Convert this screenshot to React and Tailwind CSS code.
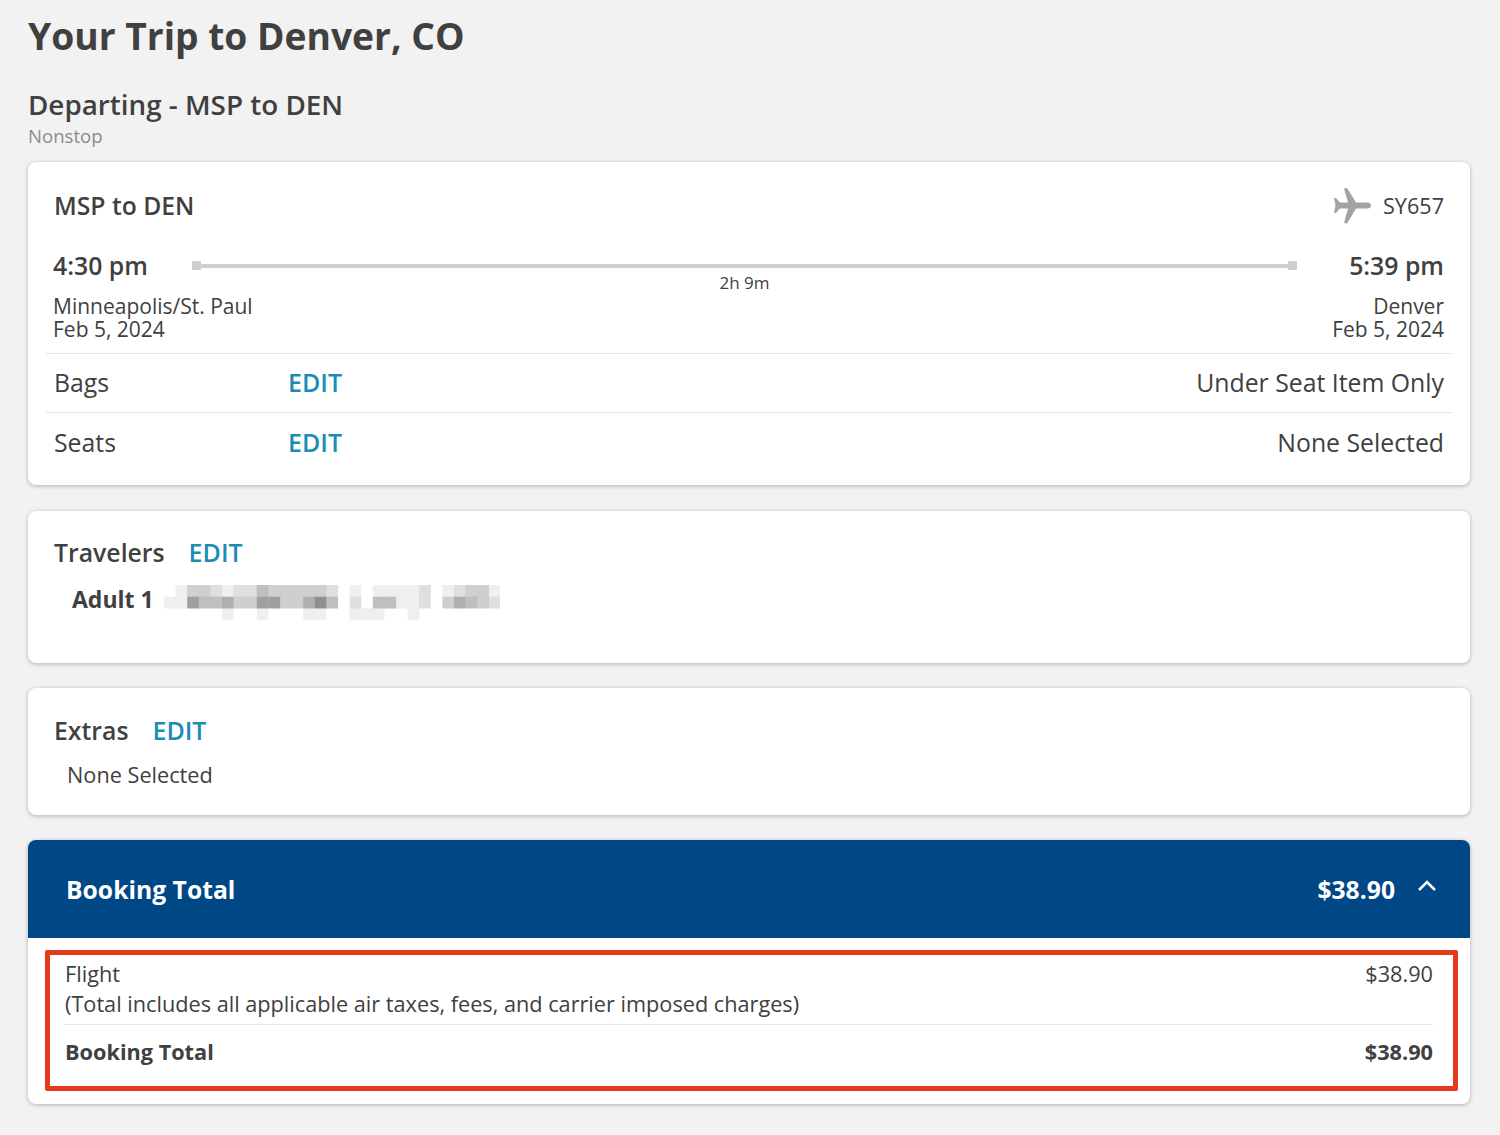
import React from "react";

const cardClass = "bg-white rounded-lg shadow-[0_1px_4px_rgba(0,0,0,0.28)]";

// gray levels of the pixelated name
const pixelRows = [
  [0, 1, 3, 3, 2, 1, 2, 2, 4, 3, 3, 3, 3, 3, 2, 0, 1, 0, 1, 1, 1, 1, 2, 0, 1, 2, 3, 3, 1],
  [1, 1, 6, 4, 4, 5, 3, 3, 6, 6, 3, 3, 5, 7, 4, 0, 2, 0, 4, 4, 1, 1, 2, 0, 3, 5, 4, 3, 2],
  [0, 0, 0, 0, 0, 1, 0, 0, 1, 0, 0, 0, 1, 1, 0, 0, 1, 1, 1, 0, 0, 1, 0, 0, 0, 0, 0, 0, 0],
];

const Edit = ({ className = "" }) => (
  <a className={`text-[#1b8db5] text-[25px] leading-[30px] font-semibold ${className}`}>EDIT</a>
);

const Plane = () => (
  <svg width="38" height="37" viewBox="0 0 38 37" fill="#a3a3a3">
    <path d="M0 10 L2 10 L6 14.5 L14 14.5 L10 0.5 L13 0 L22 14.5 L34 14.5 C38 15 38 20 34 20.5 L22 20.5 L13 35.5 L10 35 L14 20.5 L6 20.5 L2 25 L0 25 L1.5 17.5 Z" />
  </svg>
);

const RedactedName = () => (
  <svg width="336" height="36" viewBox="0 0 336 36" className="ml-[10px] mt-[3px]">
    {pixelRows.map((row, y) =>
      row.map((v, x) => (
        <rect
          key={`${x}-${y}`}
          x={x * 11.6}
          y={y * 11.7}
          width="11.7"
          height="11.8"
          fill="#6e6e6e"
          fillOpacity={v * 0.11}
        />
      ))
    )}
  </svg>
);

export default function App() {
  return (
    <div
      className="min-h-[1135px] bg-[#f2f2f2] pl-[28px] pr-[30px] pt-[12px] text-[#404040]"
      style={{ fontFamily: '"Open Sans", sans-serif' }}
    >
      <h1 className="text-[37.2px] leading-[48px] font-bold">Your Trip to Denver, CO</h1>

      <h2 className="mt-[25px] text-[27.8px] leading-[38px] font-semibold">Departing - MSP to DEN</h2>
      <p className="mt-[1px] text-[18.6px] leading-[24px] text-[#8c8c8c]">Nonstop</p>

      <section className={`${cardClass} mt-[14px] h-[323px] px-[18px]`}>
        <div className="flex items-center justify-between px-[8px] pt-[26px] h-[62px]">
          <span className="text-[24.7px] leading-[36px] font-semibold">MSP to DEN</span>
          <div className="flex items-center gap-[11px]">
            <Plane />
            <span className="text-[21.6px]">SY657</span>
          </div>
        </div>

        <div className="flex items-start pl-[7px] pr-[8px] mt-[24px]">
          <span className="w-[139px] text-[24.8px] leading-[34px] font-semibold">4:30 pm</span>
          <div className="flex-1 pt-[13px]">
            <div className="flex items-center">
              <span className="w-[9px] h-[9px] bg-[#cfcfcf]" />
              <span className="flex-1 h-[4px] bg-[#cfcfcf]" />
              <span className="w-[9px] h-[9px] bg-[#cfcfcf]" />
            </div>
            <p className="mt-[1px] text-center text-[17px] leading-[24px]">2h 9m</p>
          </div>
          <span className="w-[147px] text-right text-[24.8px] leading-[34px] font-semibold">5:39 pm</span>
        </div>

        <div className="flex justify-between pl-[7px] pr-[8px] pb-[12px] border-b border-[#e3e3e3] text-[21px] leading-[23px]">
          <div>
            <p>Minneapolis/St. Paul</p>
            <p>Feb 5, 2024</p>
          </div>
          <div className="text-right">
            <p>Denver</p>
            <p>Feb 5, 2024</p>
          </div>
        </div>

        <div className="flex items-center h-[59px] px-[8px] border-b border-[#e3e3e3] text-[24.8px]">
          <span className="w-[234px]">Bags</span>
          <Edit className="pb-[2px]" />
          <span className="ml-auto">Under Seat Item Only</span>
        </div>
        <div className="flex items-center h-[60px] px-[8px] text-[24.8px]">
          <span className="w-[234px]">Seats</span>
          <Edit className="pb-[2px]" />
          <span className="ml-auto">None Selected</span>
        </div>
      </section>

      <section className={`${cardClass} mt-[26px] h-[152px] px-[26px] pt-[26px]`}>
        <div className="flex items-center gap-[24px]">
          <span className="text-[24.8px] leading-[30px] font-semibold">Travelers</span>
          <Edit />
        </div>
        <div className="flex items-start pl-[18px] mt-[15px]">
          <span className="text-[23px] leading-[32px] font-bold pt-[1px]">Adult 1</span>
          <RedactedName />
        </div>
      </section>

      <section className={`${cardClass} mt-[25px] h-[127px] px-[26px] pt-[27px]`}>
        <div className="flex items-center gap-[24px]">
          <span className="text-[24.8px] leading-[30px] font-semibold">Extras</span>
          <Edit />
        </div>
        <p className="pl-[13px] mt-[15px] text-[21.7px] leading-[30px]">None Selected</p>
      </section>

      <section className={`${cardClass} mt-[25px] h-[264px]`}>
        <div className="flex items-center h-[98px] bg-[#004785] rounded-t-lg pl-[38px] pr-[33px] pt-[2px] text-white">
          <span className="text-[24.7px] font-bold">Booking Total</span>
          <span className="ml-auto text-[24.7px] font-bold">$38.90</span>
          <svg width="20" height="14" viewBox="0 0 20 14" fill="none" stroke="white" strokeWidth="2.5" className="ml-[22px] mb-[8px]">
            <path d="M2 11 L10 3 L18 11" />
          </svg>
        </div>
        <div className="ml-[17px] mr-[12px] mt-[12px] h-[141px] border-[5px] border-[#e23a1a] rounded-[2px] pl-[15px] pr-[20px]">
          <div className="flex justify-between pt-[4px] text-[21.7px] leading-[30px]">
            <span>Flight</span>
            <span>$38.90</span>
          </div>
          <p className="text-[21.7px] leading-[30px]">(Total includes all applicable air taxes, fees, and carrier imposed charges)</p>
          <div className="flex justify-between mt-[5px] pt-[12px] border-t border-[#e6e6e6] text-[21.7px] leading-[30px] font-bold">
            <span>Booking Total</span>
            <span>$38.90</span>
          </div>
        </div>
      </section>
    </div>
  );
}
